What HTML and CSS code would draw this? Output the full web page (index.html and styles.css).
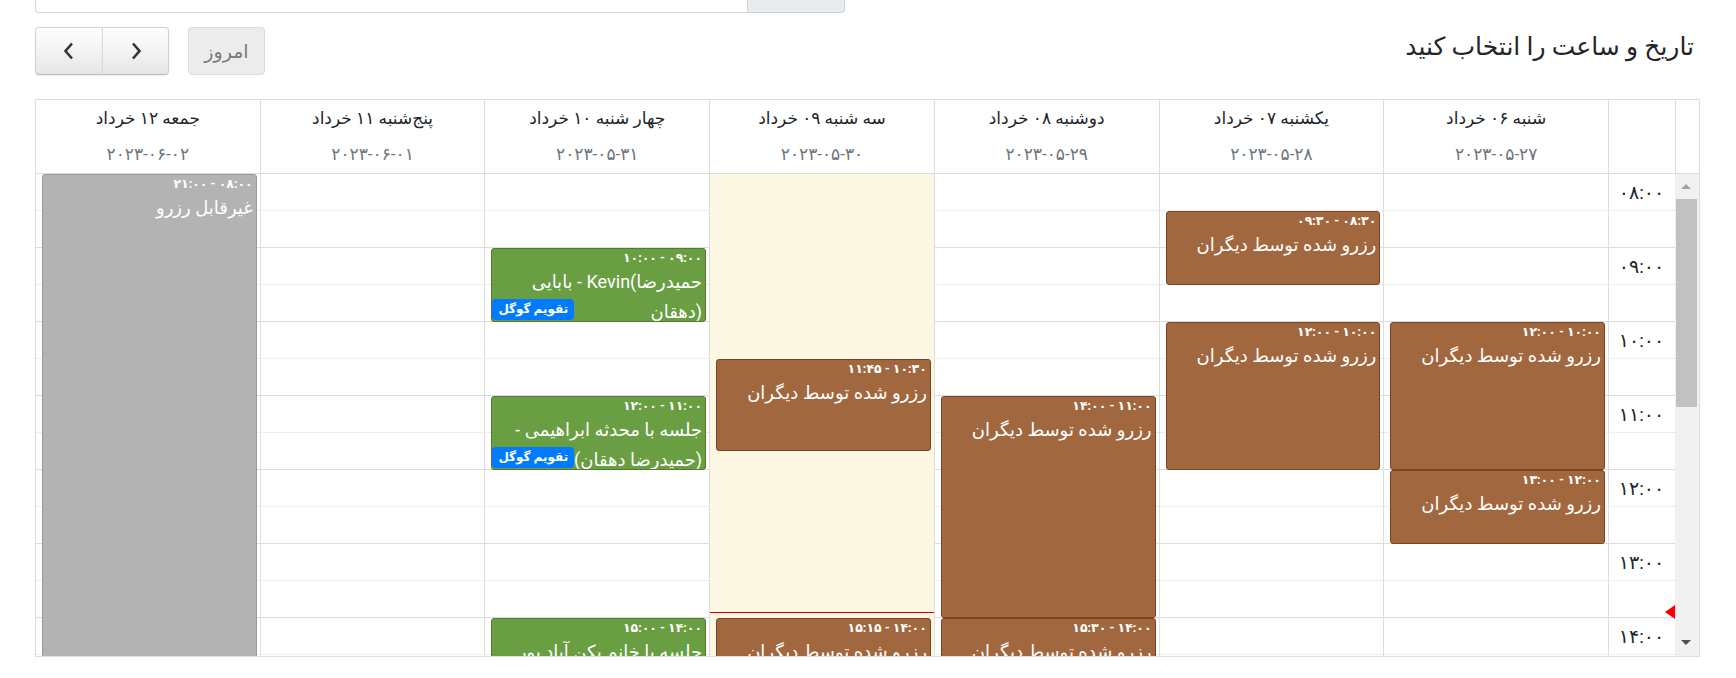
FILE: index.html
```html
<!DOCTYPE html>
<html lang="fa">
<head>
<meta charset="utf-8">
<title>انتخاب زمان</title>
<link rel="stylesheet" href="styles.css">
</head>
<body>
<div class="page">
  <div class="search">
    <div class="search-input"></div>
    <div class="search-addon"></div>
  </div>

  <div class="toolbar">
    <div class="tb-left">
      <div class="btn-group">
        <button class="btn btn-first" type="button" aria-label="prev">
          <svg width="14" height="20" viewBox="0 0 14 20"><path d="M10 2.5 L3.5 10 L10 17.5" fill="none" stroke="#333" stroke-width="2.6" stroke-linejoin="miter"/></svg>
        </button>
        <button class="btn btn-last" type="button" aria-label="next">
          <svg width="14" height="20" viewBox="0 0 14 20"><path d="M4 2.5 L10.5 10 L4 17.5" fill="none" stroke="#333" stroke-width="2.6" stroke-linejoin="miter"/></svg>
        </button>
      </div>
      <button class="btn btn-today" type="button" disabled>امروز</button>
    </div>
    <h2 class="title" dir="rtl">تاریخ و ساعت را انتخاب کنید</h2>
  </div>

  <div class="cal" dir="rtl">
    <div class="cal-head">
      <div class="gutter"></div>
      <div class="axis-head"></div>
      <div class="day-head"><div class="dname">شنبه ۰۶ خرداد</div><div class="ddate">۲۰۲۳-۰۵-۲۷</div></div>
      <div class="day-head"><div class="dname">یکشنبه ۰۷ خرداد</div><div class="ddate">۲۰۲۳-۰۵-۲۸</div></div>
      <div class="day-head"><div class="dname">دوشنبه ۰۸ خرداد</div><div class="ddate">۲۰۲۳-۰۵-۲۹</div></div>
      <div class="day-head"><div class="dname">سه شنبه ۰۹ خرداد</div><div class="ddate">۲۰۲۳-۰۵-۳۰</div></div>
      <div class="day-head"><div class="dname">چهار شنبه ۱۰ خرداد</div><div class="ddate">۲۰۲۳-۰۵-۳۱</div></div>
      <div class="day-head"><div class="dname">پنج‌شنبه ۱۱ خرداد</div><div class="ddate">۲۰۲۳-۰۶-۰۱</div></div>
      <div class="day-head"><div class="dname">جمعه ۱۲ خرداد</div><div class="ddate">۲۰۲۳-۰۶-۰۲</div></div>
    </div>

    <div class="cal-body">
      <div class="scrollbar">
        <div class="sb-up"></div>
        <div class="sb-thumb"></div>
        <div class="sb-down"></div>
      </div>
      <div class="grid">
        <div class="slats">
          <div class="slat"><div class="axis-label">۰۸:۰۰</div></div>
          <div class="slat hour-end"><div class="axis-label"></div></div>
          <div class="slat"><div class="axis-label">۰۹:۰۰</div></div>
          <div class="slat hour-end"><div class="axis-label"></div></div>
          <div class="slat"><div class="axis-label">۱۰:۰۰</div></div>
          <div class="slat hour-end"><div class="axis-label"></div></div>
          <div class="slat"><div class="axis-label">۱۱:۰۰</div></div>
          <div class="slat hour-end"><div class="axis-label"></div></div>
          <div class="slat"><div class="axis-label">۱۲:۰۰</div></div>
          <div class="slat hour-end"><div class="axis-label"></div></div>
          <div class="slat"><div class="axis-label">۱۳:۰۰</div></div>
          <div class="slat hour-end"><div class="axis-label"></div></div>
          <div class="slat"><div class="axis-label">۱۴:۰۰</div></div>
          <div class="slat hour-end"><div class="axis-label"></div></div>
          <div class="slat"><div class="axis-label">۱۵:۰۰</div></div>
          <div class="slat hour-end"><div class="axis-label"></div></div>
        </div>

        <div class="cols">
          <div class="axis-sp"></div>
          <!-- شنبه -->
          <div class="col">
            <div class="ev brown" style="top:148px;height:148px"><div class="t">۱۰:۰۰ - ۱۲:۰۰</div><div class="n">رزرو شده توسط دیگران</div></div>
            <div class="ev brown" style="top:296px;height:74px"><div class="t">۱۲:۰۰ - ۱۳:۰۰</div><div class="n">رزرو شده توسط دیگران</div></div>
          </div>
          <!-- یکشنبه -->
          <div class="col">
            <div class="ev brown" style="top:37px;height:74px"><div class="t">۰۸:۳۰ - ۰۹:۳۰</div><div class="n">رزرو شده توسط دیگران</div></div>
            <div class="ev brown" style="top:148px;height:148px"><div class="t">۱۰:۰۰ - ۱۲:۰۰</div><div class="n">رزرو شده توسط دیگران</div></div>
          </div>
          <!-- دوشنبه -->
          <div class="col">
            <div class="ev brown" style="top:222px;height:222px"><div class="t">۱۱:۰۰ - ۱۴:۰۰</div><div class="n">رزرو شده توسط دیگران</div></div>
            <div class="ev brown" style="top:444px;height:111px"><div class="t">۱۴:۰۰ - ۱۵:۳۰</div><div class="n">رزرو شده توسط دیگران</div></div>
          </div>
          <!-- سه شنبه (امروز) -->
          <div class="col today">
            <div class="ev brown" style="top:185px;height:92px"><div class="t">۱۰:۳۰ - ۱۱:۴۵</div><div class="n">رزرو شده توسط دیگران</div></div>
            <div class="now-line" style="top:438px"></div>
            <div class="ev brown" style="top:444px;height:92px"><div class="t">۱۴:۰۰ - ۱۵:۱۵</div><div class="n">رزرو شده توسط دیگران</div></div>
          </div>
          <!-- چهارشنبه -->
          <div class="col">
            <div class="ev green" style="top:74px;height:74px"><div class="t">۰۹:۰۰ - ۱۰:۰۰</div><div class="n" dir="ltr">بابایی - Kevin(حمیدرضا دهقان)</div><span class="badge">تقویم گوگل</span></div>
            <div class="ev green" style="top:222px;height:74px"><div class="t">۱۱:۰۰ - ۱۲:۰۰</div><div class="n">جلسه با محدثه ابراهیمی - (حمیدرضا دهقان)</div><span class="badge">تقویم گوگل</span></div>
            <div class="ev green" style="top:444px;height:74px"><div class="t">۱۴:۰۰ - ۱۵:۰۰</div><div class="n">جلسه با خانم یکن آباد پور</div></div>
          </div>
          <!-- پنجشنبه -->
          <div class="col"></div>
          <!-- جمعه -->
          <div class="col">
            <div class="ev grey" style="top:0;height:962px"><div class="t">۰۸:۰۰ - ۲۱:۰۰</div><div class="n">غیرقابل رزرو</div></div>
          </div>
        </div>
        <div class="now-arrow" style="top:431px"></div>
      </div>
    </div>
  </div>
</div>
</body>
</html>
```

FILE: styles.css
```css
* {
  box-sizing: border-box;
  margin: 0;
  padding: 0;
}

body {
  margin: 0;
  background: #fff;
  color: #212529;
  font-family: Roboto, "DejaVu Sans", sans-serif;
}

.page {
  padding: 0 36px 0 35px;
}

/* partially visible input group at the very top */
.search {
  display: flex;
  width: 810px;
  height: 13px;
}

.search-input {
  flex: 0 0 712px;
  border: 1px solid #ced4da;
  border-top: 0;
  border-right: 0;
  border-radius: 0 0 0 4px;
}

.search-addon {
  flex: 1;
  background: #e9ecef;
  border: 1px solid #ced4da;
  border-top: 0;
  border-radius: 0 0 4px 0;
}

/* toolbar */
.toolbar {
  display: flex;
  justify-content: space-between;
  align-items: flex-start;
  margin-top: 14px;
  height: 48px;
}

.tb-left {
  display: flex;
  gap: 19px;
}

.btn-group {
  display: flex;
}

.btn {
  height: 48px;
  display: flex;
  align-items: center;
  justify-content: center;
  background-color: #f5f5f5;
  background-image: linear-gradient(to bottom, #ffffff, #e6e6e6);
  border: 1px solid #d3d3d3;
  border-bottom-color: #bdbdbd;
  color: #333;
  box-shadow: inset 0 1px 0 rgba(255, 255, 255, 0.2), 0 1px 2px rgba(0, 0, 0, 0.08);
  font-family: Roboto, "DejaVu Sans", sans-serif;
  cursor: pointer;
}

.btn-first {
  width: 68px;
  border-radius: 4px 0 0 4px;
}

.btn-last {
  width: 67px;
  border-left: 1px solid #d9d9d9;
  margin-left: -1px;
  border-radius: 0 4px 4px 0;
}

.btn-today {
  width: 77px;
  border-radius: 4px;
  background-image: none;
  background-color: #ececec;
  border-color: #dcdcdc;
  box-shadow: none;
  color: #7a7a7a;
  font-size: 19px;
  cursor: default;
}

.title {
  margin: 4px 6px 0 0;
  font-size: 25px;
  font-weight: normal;
  line-height: 32px;
  color: #212529;
}

/* calendar */
.cal {
  margin-top: 24px;
  border: 1px solid #ddd;
}

.cal-head {
  display: flex;
  height: 74px;
  border-bottom: 1px solid #ddd;
}

.gutter {
  flex: 0 0 24px;
  border-left: 1px solid #ddd;
}

.axis-head {
  flex: 0 0 67px;
  border-left: 1px solid #ddd;
}

.day-head {
  flex: 1 1 0;
  min-width: 0;
  border-left: 1px solid #ddd;
  text-align: center;
  padding-top: 5px;
}

.day-head:last-child {
  border-left: 0;
}

.dname {
  font-size: 17px;
  line-height: 26px;
  color: #212529;
}

.ddate {
  margin-top: 10px;
  font-size: 17px;
  line-height: 26px;
  color: #6c757d;
}

.cal-body {
  display: flex;
  height: 482px;
  overflow: hidden;
}

/* fake scrollbar */
.scrollbar {
  flex: 0 0 24px;
  position: relative;
  background: #f1f1f1;
}

.sb-up {
  position: absolute;
  top: 10px;
  left: 6px;
  width: 0;
  height: 0;
  border-left: 5.5px solid transparent;
  border-right: 5.5px solid transparent;
  border-bottom: 5px solid #a3a3a3;
}

.sb-down {
  position: absolute;
  top: 466px;
  left: 6px;
  width: 0;
  height: 0;
  border-left: 5.5px solid transparent;
  border-right: 5.5px solid transparent;
  border-top: 5px solid #505050;
}

.sb-thumb {
  position: absolute;
  top: 25px;
  left: 1px;
  right: 2px;
  height: 208px;
  background: #c1c1c1;
}

.grid {
  flex: 1;
  position: relative;
}

.slat {
  display: flex;
  height: 37px;
  border-bottom: 1px dotted #ddd;
}

.slat.hour-end {
  border-bottom: 1px solid #ddd;
}

.axis-label {
  flex: 0 0 67px;
  display: flex;
  align-items: center;
  justify-content: center;
  font-size: 19px;
  color: #212529;
}

.cols {
  position: absolute;
  top: 0;
  right: 0;
  bottom: 0;
  left: 0;
  display: flex;
}

.axis-sp {
  flex: 0 0 67px;
  border-left: 1px solid #ddd;
}

.col {
  flex: 1 1 0;
  min-width: 0;
  position: relative;
  border-left: 1px solid #ddd;
}

.col:last-child {
  border-left: 0;
}

.col.today {
  background: #fcf8e3;
}

/* events */
.ev {
  position: absolute;
  left: 6px;
  right: 3px;
  border: 1px solid;
  border-radius: 3px;
  color: #fff;
  overflow: hidden;
}

.ev .t {
  font-size: 12.5px;
  font-weight: bold;
  line-height: 18px;
  padding: 0 3px;
  text-align: right;
  white-space: nowrap;
}

.ev .n {
  font-size: 18px;
  line-height: 30px;
  padding: 0 3px;
  text-align: right;
}

.brown {
  background: #a1683f;
  border-color: #7d4320;
}

.green {
  background: #699e42;
  border-color: #4f7e30;
}

.grey {
  background: #b3b3b3;
  border-color: #999;
}

.badge {
  position: absolute;
  left: 0;
  bottom: 1px;
  background: #007bff;
  color: #fff;
  font-size: 12px;
  font-weight: bold;
  line-height: 17px;
  padding: 2px 6px;
  border-radius: 4px;
  white-space: nowrap;
}

.now-line {
  position: absolute;
  left: 0;
  right: 0;
  height: 0;
  border-top: 1px solid #e00000;
}

.now-arrow {
  position: absolute;
  right: 0;
  width: 0;
  height: 0;
  border-top: 7px solid transparent;
  border-bottom: 7px solid transparent;
  border-right: 10px solid #ff0000;
}
```
